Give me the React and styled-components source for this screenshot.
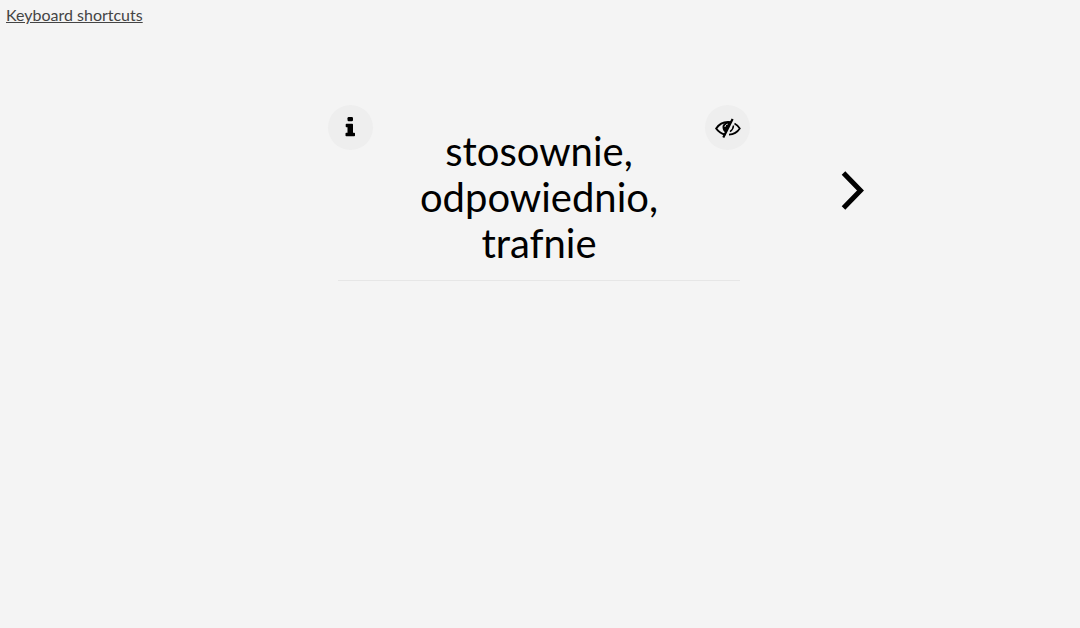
import React from "react";
import styled, { createGlobalStyle } from "styled-components";

const GlobalStyle = createGlobalStyle`
  * { box-sizing: border-box; }
  body {
    margin: 0;
    background: #f4f4f4;
    color: #000;
    font-family: Lato, "Open Sans", sans-serif;
  }
`;

const Page = styled.div`
  min-height: 100vh;
`;

const TopBar = styled.header`
  display: flex;
  padding: 5px 6px;
`;

const ShortcutsLink = styled.a`
  color: #444;
  font-size: 16px;
  line-height: 20px;
`;

const Deck = styled.main`
  display: grid;
  grid-template-columns: 1fr minmax(0, 424px) 1fr;
  align-items: start;
  padding-top: 75px;
`;

const Card = styled.section`
  grid-column: 2;
  display: grid;
  grid-template-columns: 45px 1fr 45px;
  padding-right: 2px;
`;

const RoundButton = styled.button`
  display: flex;
  align-items: center;
  justify-content: center;
  width: 45px;
  height: 45px;
  padding: 0;
  border: 0;
  border-radius: 50%;
  background: #eee;
  color: #000;
  cursor: pointer;
`;

const Word = styled.h1`
  margin: 0;
  padding: 23px 32px 14px;
  font-size: 40px;
  font-weight: 400;
  line-height: 46px;
  text-align: center;
`;

const Divider = styled.hr`
  grid-column: 1 / -1;
  width: calc(100% - 20px);
  height: 1px;
  margin: 0 auto;
  border: 0;
  background: #e6e6e6;
`;

const NextButton = styled.button`
  justify-self: start;
  margin: 63px 0 0 88px;
  padding: 0;
  border: 0;
  background: none;
  color: #000;
  cursor: pointer;

  svg { display: block; }
`;

function InfoIcon() {
  return (
    <svg width="11" height="21" viewBox="0 0 11 21" fill="currentColor" aria-hidden="true">
      <rect x="2.500" y="0" width="5.500" height="4.300" rx="1.200" />
      <path d="M1.500 6.700H7.200Q8 6.700 8 7.500V15.700H9.200Q10 15.700 10 16.500V18.400Q10 19.200 9.200 19.200H1.300Q0.500 19.200 0.500 18.400V16.500Q0.500 15.700 1.300 15.700H2.500V10.200H1.500Q0.700 10.200 0.700 9.400V7.500Q0.700 6.700 1.500 6.700Z" />
    </svg>
  );
}

function EyeOffIcon() {
  return (
    <svg width="26" height="20" viewBox="0 0 26 20" fill="none" stroke="currentColor" strokeWidth="2" aria-hidden="true">
      <path d="M10.500 16.500C6.500 15.900 3.300 13.600 1.200 10.500C3.800 6.400 8 4 13 4C14 4 15 4.100 16 4.300" />
      <path d="M19.500 5.400C21.800 6.600 23.500 8.400 24.800 10.500C22.500 14 19 16.300 14 16.600" strokeWidth="1.700" />
      <path d="M17.600 1L8.300 19.500" strokeWidth="2.200" />
      <path d="M18.500 7.500C18.300 10.200 17 12.300 15 13.600" strokeWidth="1.500" />
      <path d="M15.500 4C10.500 3.600 7.500 5.800 7.500 9C7.500 11.800 8.700 13.700 10.800 14.800Z" fill="currentColor" stroke="none" />
      <path d="M10 8.600C10.200 7.300 11 6.400 12.300 6.200" stroke="#eee" strokeWidth="1" strokeLinecap="round" />
    </svg>
  );
}

function App() {
  return (
    <Page>
      <GlobalStyle />
      <TopBar>
        <ShortcutsLink href="#shortcuts">Keyboard shortcuts</ShortcutsLink>
      </TopBar>
      <Deck>
        <Card>
          <RoundButton type="button" aria-label="Information">
            <InfoIcon />
          </RoundButton>
          <Word>stosownie, odpowiednio, trafnie</Word>
          <RoundButton type="button" aria-label="Hide">
            <EyeOffIcon />
          </RoundButton>
          <Divider />
        </Card>
        <NextButton type="button" aria-label="Next">
          <svg width="26" height="44" viewBox="0 0 26 44" fill="none" stroke="currentColor" strokeWidth="5" aria-hidden="true">
            <path d="M3.500 5L20.500 22.500L3.500 40" />
          </svg>
        </NextButton>
      </Deck>
    </Page>
  );
}

export default App;
